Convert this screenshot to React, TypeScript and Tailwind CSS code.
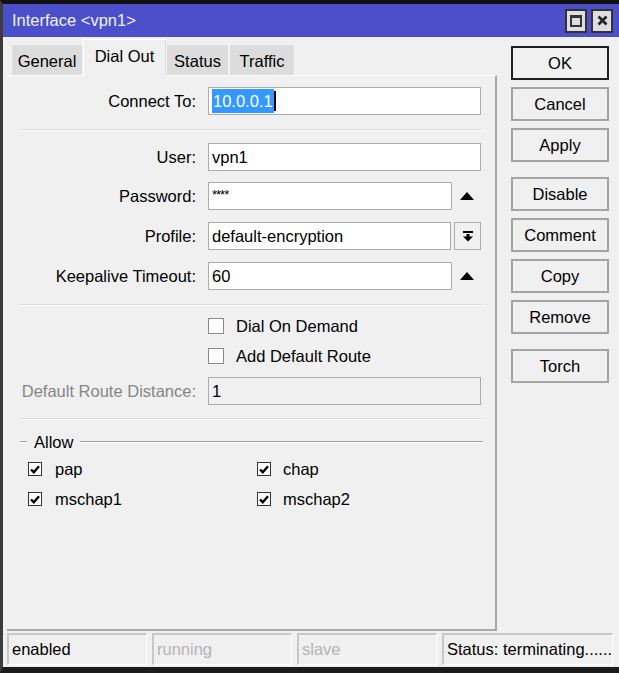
import React from "react";

const font = { fontFamily: '"Liberation Sans", Arial, sans-serif' };

const UpArrow = () => (
  <div className="w-[29px] flex justify-center">
    <svg width="14" height="8" viewBox="0 0 14 8">
      <polygon points="0,8 14,8 7,0" fill="#000" />
    </svg>
  </div>
);

const CheckBox = ({ checked, size }: { checked?: boolean; size: number }) => (
  <div
    className={
      size === 16
        ? "w-[16px] h-[16px] border border-[#8a8a8a] bg-white flex items-center justify-center shrink-0"
        : "w-[14px] h-[14px] border border-[#333] bg-white flex items-center justify-center shrink-0"
    }
  >
    {checked && (
      <svg width="10" height="9" viewBox="0 0 10 9">
        <path d="M1 4.5 L3.8 7.2 L9 1.2" stroke="#000" strokeWidth="2.4" fill="none" />
      </svg>
    )}
  </div>
);

const Separator = ({ mt }: { mt: string }) => (
  <div className={`${mt} mx-[13px] h-[2px] border-t border-[#dadada] border-b border-b-white`} />
);

const Label = ({ text, disabled }: { text: string; disabled?: boolean }) => (
  <div className={`w-[201px] pr-[12px] text-right shrink-0 whitespace-nowrap ${disabled ? "text-[#858585]" : "text-black"}`}>
    {text}
  </div>
);

const inputCls = "h-[28px] border border-[#acacac] bg-white flex items-center pl-[3px] text-black";

const buttons: { label: string; gap: string; primary?: boolean }[] = [
  { label: "OK", gap: "mt-0", primary: true },
  { label: "Cancel", gap: "mt-[7px]" },
  { label: "Apply", gap: "mt-[7px]" },
  { label: "Disable", gap: "mt-[15px]" },
  { label: "Comment", gap: "mt-[7px]" },
  { label: "Copy", gap: "mt-[7px]" },
  { label: "Remove", gap: "mt-[7px]" },
  { label: "Torch", gap: "mt-[15px]" },
];

const tabs = [
  { label: "General", w: "w-[72px]" },
  { label: "Dial Out", w: "w-[83px]", active: true },
  { label: "Status", w: "w-[63px]" },
  { label: "Traffic", w: "w-[66px]" },
];

const statusCells = [
  { text: "enabled", w: "w-[140px]", color: "text-black" },
  { text: "running", w: "w-[140px]", color: "text-[#b4b4b4]" },
  { text: "slave", w: "w-[140px]", color: "text-[#b4b4b4]" },
  { text: "Status: terminating......", w: "w-[171px]", color: "text-black" },
];

export default function App() {
  return (
    <div
      className="w-[619px] h-[673px] flex flex-col bg-[#f0f0f0] border-l-[3px] border-l-[#3c3c3c] border-t-[4px] border-t-[#111] border-b-[6px] border-b-[#1b1b1b] text-[16.5px] overflow-hidden"
      style={font}
    >
      {/* title bar */}
      <div className="h-[33px] bg-[#4b4fca] flex items-center pl-[9px] pr-[6px] shrink-0">
        <span className="text-[#f2f2ff] flex-1">Interface &lt;vpn1&gt;</span>
        <div className="w-[22px] h-[24px] bg-[#dedede] border-2 border-[#333] flex items-center justify-center">
          <div className="w-[12px] h-[12px] border-2 border-[#333] border-t-[3px]" />
        </div>
        <div className="ml-[4px] w-[22px] h-[24px] bg-[#dedede] border-2 border-[#333] flex items-center justify-center">
          <svg width="11" height="11" viewBox="0 0 11 11">
            <path d="M1.5 1.5 L9.5 9.5 M9.5 1.5 L1.5 9.5" stroke="#222" strokeWidth="2.6" />
          </svg>
        </div>
      </div>

      {/* main */}
      <div className="flex flex-1 pl-[4px]">
        <div className="w-[490px] flex flex-col">
          <div className="h-[38px] flex items-end pl-[4px]">
            {tabs.map((t) =>
              t.active ? (
                <div
                  key={t.label}
                  className={`${t.w} h-[37px] -mb-[1px] bg-[#f0f0f0] border-t border-l border-r border-[#dcdcdc] border-t-white border-l-white flex items-center justify-center pb-[3px] relative z-10`}
                >
                  {t.label}
                </div>
              ) : (
                <div
                  key={t.label}
                  className={`${t.w} h-[31px] bg-[#dcdcdc] border-t border-l border-r border-[#f4f4f4] flex items-center justify-center pt-[2px]`}
                >
                  {t.label}
                </div>
              )
            )}
          </div>

          <div className="flex-1 border-t border-t-white border-r-2 border-r-[#a8a8a8] border-b-2 border-b-[#a8a8a8] flex flex-col">
            <div className="mt-[11px] flex items-center h-[28px]">
              <Label text="Connect To:" />
              <div className={`${inputCls} w-[273px]`}>
                <span className="bg-[#3399ff] text-white pl-[1px] pr-[1px]">10.0.0.1</span>
                <span className="w-[2px] h-[20px] bg-black" />
              </div>
            </div>

            <Separator mt="mt-[14px]" />

            <div className="mt-[12px] flex items-center h-[28px]">
              <Label text="User:" />
              <div className={`${inputCls} w-[273px]`}>vpn1</div>
            </div>

            <div className="mt-[11px] flex items-center h-[28px]">
              <Label text="Password:" />
              <div className={`${inputCls} w-[244px]`}>
                <span className="text-[13px] leading-none -mt-[4px] tracking-[-1px]">****</span>
              </div>
              <UpArrow />
            </div>

            <div className="mt-[12px] flex items-center h-[28px]">
              <Label text="Profile:" />
              <div className={`${inputCls} w-[243px]`}>default-encryption</div>
              <div className="ml-[3px] w-[27px] h-[28px] border border-[#acacac] bg-[#f0f0f0] flex items-center justify-center">
                <svg width="10" height="11" viewBox="0 0 10 11">
                  <rect x="0" y="0" width="10" height="2" fill="#000" />
                  <rect x="3.5" y="3" width="3" height="3" fill="#000" />
                  <polygon points="0,5.5 10,5.5 5,10.5" fill="#000" />
                </svg>
              </div>
            </div>

            <div className="mt-[12px] flex items-center h-[28px]">
              <Label text="Keepalive Timeout:" />
              <div className={`${inputCls} w-[244px]`}>60</div>
              <UpArrow />
            </div>

            <Separator mt="mt-[14px]" />

            <div className="mt-[11px] flex items-center h-[18px] pl-[201px] gap-[12px]">
              <CheckBox size={16} />
              <span>Dial On Demand</span>
            </div>
            <div className="mt-[12px] flex items-center h-[18px] pl-[201px] gap-[12px]">
              <CheckBox size={16} />
              <span>Add Default Route</span>
            </div>

            <div className="mt-[12px] flex items-center h-[28px]">
              <Label text="Default Route Distance:" disabled />
              <div className="h-[28px] w-[273px] border border-[#acacac] bg-[#f0f0f0] flex items-center pl-[3px] text-black">
                1
              </div>
            </div>

            <Separator mt="mt-[13px]" />

            <div className="mt-[12px] h-[20px] flex items-center pl-[13px] pr-[12px]">
              <div className="w-[7px] h-[2px] border-t border-[#a0a0a0] border-b border-b-white" />
              <span className="px-[7px]">Allow</span>
              <div className="flex-1 h-[2px] border-t border-[#a0a0a0] border-b border-b-white" />
            </div>

            <div className="mt-[8px] flex pl-[21px] h-[18px] items-center">
              <div className="w-[229px] flex items-center gap-[13px]">
                <CheckBox size={14} checked />
                <span>pap</span>
              </div>
              <div className="flex items-center gap-[12px]">
                <CheckBox size={14} checked />
                <span>chap</span>
              </div>
            </div>
            <div className="mt-[12px] flex pl-[21px] h-[18px] items-center">
              <div className="w-[229px] flex items-center gap-[13px]">
                <CheckBox size={14} checked />
                <span>mschap1</span>
              </div>
              <div className="flex items-center gap-[12px]">
                <CheckBox size={14} checked />
                <span>mschap2</span>
              </div>
            </div>
          </div>
        </div>

        <div className="ml-[14px] w-[98px] pt-[9px] flex flex-col">
          {buttons.map((b) => (
            <div
              key={b.label}
              className={`${b.gap} h-[34px] flex items-center justify-center bg-[#f0f0f0] border-2 ${
                b.primary ? "border-[#1e1e1e]" : "border-[#a3a3a3]"
              }`}
            >
              {b.label}
            </div>
          ))}
        </div>
      </div>

      {/* status bar */}
      <div className="h-[36px] shrink-0 flex gap-[5px] pl-[4px] pt-[2px] pb-[2px]">
        {statusCells.map((c) => (
          <div
            key={c.text}
            className={`${c.w} h-[32px] border-t-2 border-l-2 border-[#c8c8c8] border-b border-r border-b-white border-r-white flex items-center pl-[3px] ${c.color} whitespace-nowrap overflow-hidden`}
          >
            {c.text}
          </div>
        ))}
      </div>
    </div>
  );
}
